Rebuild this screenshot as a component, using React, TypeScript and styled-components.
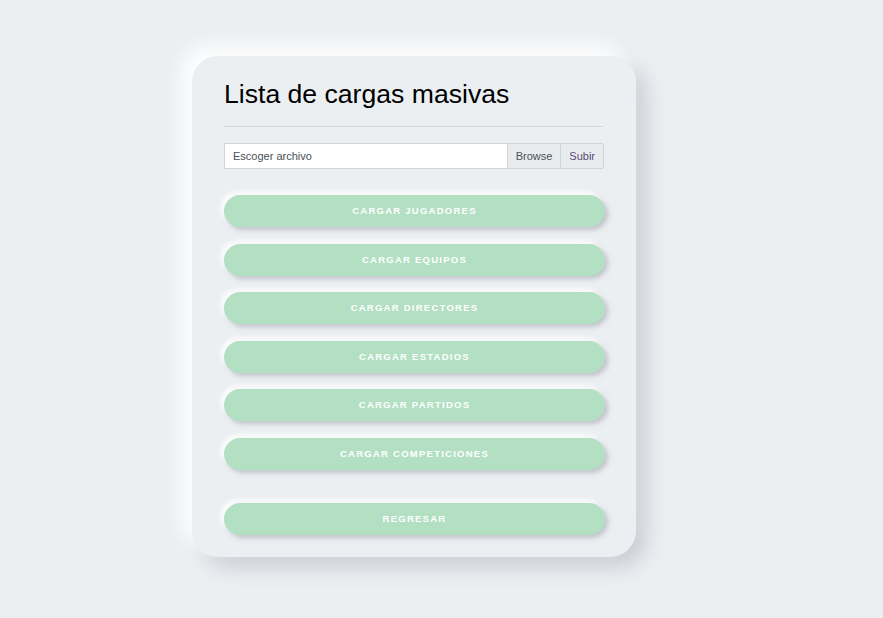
import React from "react";
import styled, { createGlobalStyle } from "styled-components";

const Global = createGlobalStyle`
  html, body { margin: 0; padding: 0; background: #eceff2; }
  body { font-family: "Liberation Sans", Arial, sans-serif; }
`;

const Page = styled.div`
  min-height: 618px;
  display: flex;
  justify-content: flex-start;
  align-items: flex-start;
  padding: 56px 0 0 192px;
  box-sizing: border-box;
`;

const Card = styled.div`
  width: 444px;
  height: 501px;
  box-sizing: border-box;
  background: #eceff2;
  border-radius: 26px;
  padding: 22px 32px 0 32px;
  box-shadow: -10px -10px 18px rgba(255, 255, 255, 0.95),
    10px 10px 20px rgba(160, 165, 175, 0.45);
  display: flex;
  flex-direction: column;
`;

const Title = styled.h1`
  margin: 0;
  font-size: 26.6px;
  font-weight: 400;
  line-height: 32px;
  color: #000;
`;

const Rule = styled.hr`
  margin: 16px 0 16px 0;
  border: 0;
  border-top: 1px solid #d3d6da;
  width: 379px;
`;

const FileRow = styled.div`
  display: flex;
  width: 380px;
  height: 26px;
  font-size: 11px;
  color: #495057;
`;

const FileInput = styled.div`
  flex: 1;
  background: #fff;
  border: 1px solid #ced4da;
  border-right: 0;
  border-radius: 2px 0 0 2px;
  display: flex;
  align-items: center;
  padding-left: 8px;
`;

const Addon = styled.div<{ $last?: boolean }>`
  background: #e9ecef;
  border: 1px solid #ced4da;
  border-right: ${(p) => (p.$last ? "1px solid #ced4da" : "0")};
  border-radius: ${(p) => (p.$last ? "0 2px 2px 0" : "0")};
  color: ${(p) => (p.$last ? "#574c78" : "#495057")};
  display: flex;
  align-items: center;
  padding: 0 8px;
`;

const ButtonList = styled.div`
  display: flex;
  flex-direction: column;
  gap: 16.6px;
  margin-top: 26px;
`;

const PillButton = styled.button`
  width: 381px;
  height: 32px;
  border: 0;
  border-radius: 16px;
  background: #b3e0c3;
  color: #fff;
  font-family: "Liberation Sans", Arial, sans-serif;
  font-size: 9.5px;
  font-weight: 700;
  letter-spacing: 1.25px;
  text-transform: uppercase;
  box-shadow: 3px 3px 5px rgba(150, 155, 165, 0.5),
    -3px -3px 5px rgba(255, 255, 255, 0.9);
  cursor: pointer;
  padding: 0 0 1px 0;
`;

const BackWrap = styled.div`
  margin-top: 33px;
`;

const items = [
  "Cargar Jugadores",
  "Cargar Equipos",
  "Cargar Directores",
  "Cargar Estadios",
  "Cargar Partidos",
  "Cargar Competiciones",
];

export default function App() {
  return (
    <>
      <Global />
      <Page>
        <Card>
          <Title>Lista de cargas masivas</Title>
          <Rule />
          <FileRow>
            <FileInput>Escoger archivo</FileInput>
            <Addon>Browse</Addon>
            <Addon $last>Subir</Addon>
          </FileRow>
          <ButtonList>
            {items.map((t) => (
              <PillButton key={t}>{t}</PillButton>
            ))}
          </ButtonList>
          <BackWrap>
            <PillButton>Regresar</PillButton>
          </BackWrap>
        </Card>
      </Page>
    </>
  );
}
